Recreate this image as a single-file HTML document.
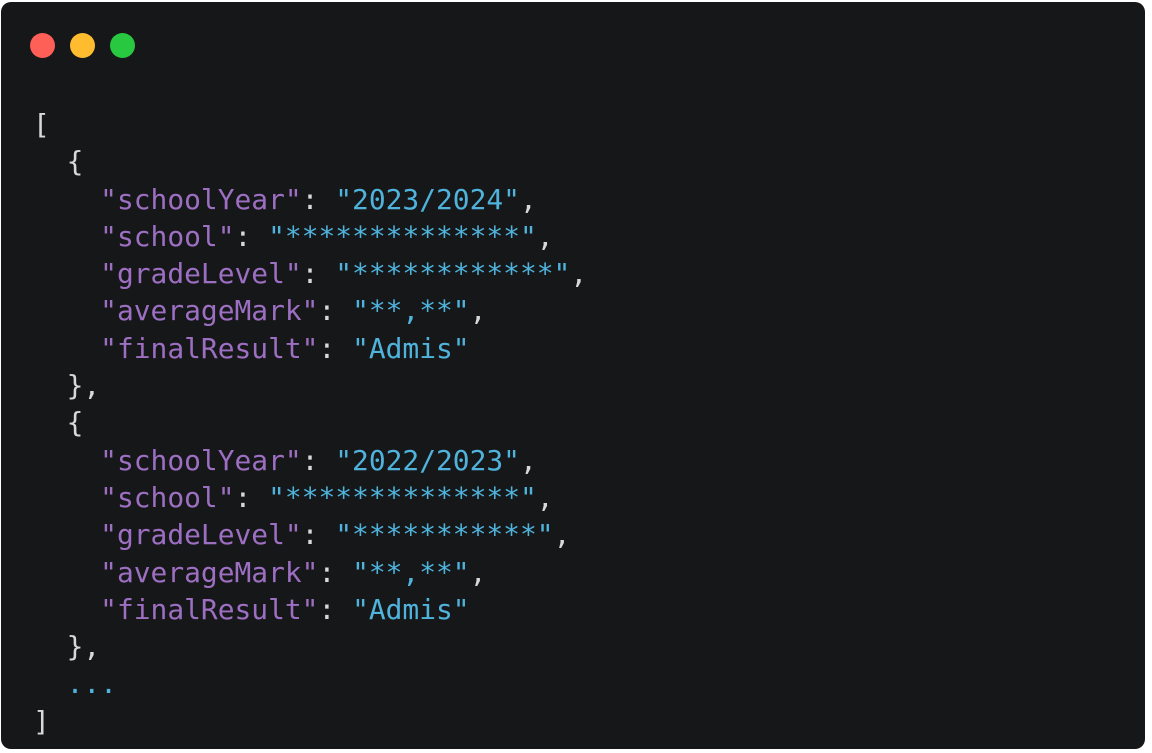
<!DOCTYPE html><html><head><style>
html,body{margin:0;padding:0;background:#fff;width:1152px;height:753px;overflow:hidden}
.p{position:absolute;left:1px;top:2px;width:1144px;height:747px;background:#161719;border-radius:10px}
.d{position:absolute;top:31px;width:25px;height:25px;border-radius:50%}
pre{position:absolute;left:33px;top:106px;margin:0;font-family:"DejaVu Sans Mono","Liberation Mono",monospace;font-size:27.9px;line-height:37.3px;color:#d8d8d8}
.k{color:#9d6fc2}.s{color:#4fb3dc}
</style></head><body><div class="p">
<div class="d" style="left:29px;background:#fe5f57"></div>
<div class="d" style="left:69px;background:#febc2e"></div>
<div class="d" style="left:109px;background:#28c840"></div>
</div>
<pre>[
  {
    <span class="k">"schoolYear"</span>: <span class="s">"2023/2024"</span>,
    <span class="k">"school"</span>: <span class="s">"**************"</span>,
    <span class="k">"gradeLevel"</span>: <span class="s">"************"</span>,
    <span class="k">"averageMark"</span>: <span class="s">"**,**"</span>,
    <span class="k">"finalResult"</span>: <span class="s">"Admis"</span>
  },
  {
    <span class="k">"schoolYear"</span>: <span class="s">"2022/2023"</span>,
    <span class="k">"school"</span>: <span class="s">"**************"</span>,
    <span class="k">"gradeLevel"</span>: <span class="s">"***********"</span>,
    <span class="k">"averageMark"</span>: <span class="s">"**,**"</span>,
    <span class="k">"finalResult"</span>: <span class="s">"Admis"</span>
  },
  <span class="s">...</span>
]</pre>
</body></html>
